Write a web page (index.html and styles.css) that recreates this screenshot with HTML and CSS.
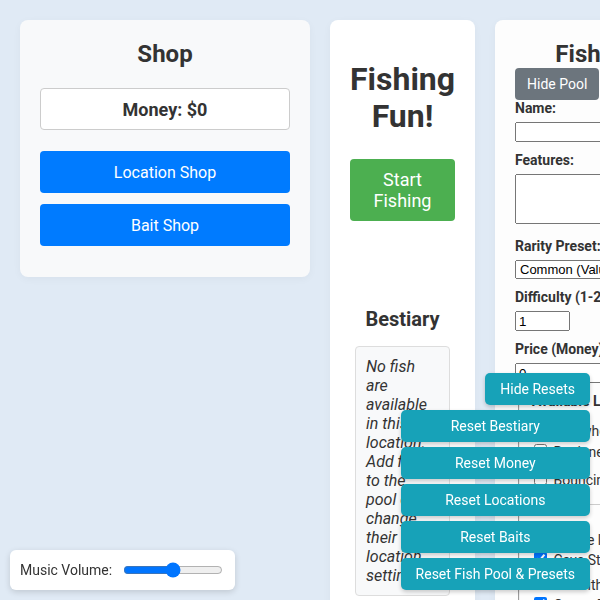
FILE: index.html
```html
<!DOCTYPE html>
<html lang="en">
<head>
<meta charset="utf-8">
<title>Fishing Fun!</title>
<link rel="stylesheet" href="styles.css">
</head>
<body>
<div class="app">
  <section class="panel shop">
    <h2 class="panel-title">Shop</h2>
    <div class="money">Money: $0</div>
    <button class="btn btn-blue">Location Shop</button>
    <button class="btn btn-blue">Bait Shop</button>
  </section>

  <section class="panel main">
    <h1 class="game-title">Fishing Fun!</h1>
    <button class="btn btn-green">Start Fishing</button>
    <div class="bestiary">
      <h2 class="bestiary-title">Bestiary</h2>
      <div class="bestiary-box">No fish are available in this location. Add fish to the pool or change their location settings.</div>
    </div>
  </section>

  <section class="panel pool">
    <h2 class="pool-title">Fish Pool Editor</h2>
    <button class="btn btn-gray">Hide Pool</button>
    <div class="field">
      <label class="field-label">Name:</label>
      <input class="text-input" type="text">
    </div>
    <div class="field">
      <label class="field-label">Features:</label>
      <textarea class="text-area"></textarea>
    </div>
    <div class="field">
      <label class="field-label">Rarity Preset:</label>
      <select class="select-input"><option>Common (Value x1, Difficulty 1)</option></select>
    </div>
    <div class="field">
      <label class="field-label">Difficulty (1-20):</label>
      <input class="num-input" type="text" value="1">
    </div>
    <div class="field">
      <label class="field-label">Price (Money):</label>
      <input class="text-input" type="text" value="0">
    </div>
    <fieldset class="locations">
      <legend class="loc-legend">Available Locations:</legend>
      <div class="loc-group">
        <div class="loc-note">Choose where it spawns</div>
        <label class="loc-item"><input type="checkbox"> Beginner's Lake Shore</label>
        <label class="loc-item"><input type="checkbox"> Bouncing Brook</label>
      </div>
      <div class="loc-group loc-sep">
        <div class="loc-note">Deep cave location</div>
        <label class="loc-item"><input type="checkbox" checked> Cave Stream</label>
        <div class="loc-note loc-gap">Shared with the lake</div>
        <label class="loc-item"><input type="checkbox" checked> Ocean Pier</label>
      </div>
    </fieldset>
  </section>
</div>

<div class="resets">
  <button class="btn btn-teal">Hide Resets</button>
  <div class="reset-list">
    <button class="btn btn-teal">Reset Bestiary</button>
    <button class="btn btn-teal">Reset Money</button>
    <button class="btn btn-teal">Reset Locations</button>
    <button class="btn btn-teal">Reset Baits</button>
    <button class="btn btn-teal">Reset Fish Pool &amp; Presets</button>
  </div>
</div>

<div class="volume">
  <label class="volume-label">Music Volume:</label>
  <input class="volume-range" type="range" min="0" max="1" step="0.01" value="0.5">
</div>
</body>
</html>
```

FILE: styles.css
```css
html, body {
  margin: 0;
  padding: 0;
  overflow: hidden;
}
body {
  background: #e0eaf5;
  font-family: Roboto, "Liberation Sans", sans-serif;
  color: #333;
}
.app {
  display: flex;
  align-items: flex-start;
  gap: 20px;
  padding: 20px;
}
.panel {
  box-sizing: border-box;
  flex: 0 0 auto;
  padding: 20px;
  border-radius: 8px;
  background: #fff;
  box-shadow: 0 2px 8px rgba(0, 0, 0, 0.04);
}
.shop {
  width: 290px;
  background: #f8f9fa;
}
.main {
  width: 145px;
  text-align: center;
}
.pool {
  width: 290px;
  background: #fdfdfd;
}
.panel-title,
.pool-title {
  font-size: 24px;
  line-height: 28px;
  font-weight: 700;
  text-align: center;
}
.panel-title {
  margin: 0 0 20px;
}
.pool-title {
  margin: 0;
}
.money {
  box-sizing: border-box;
  background: #fff;
  border: 1px solid #ccc;
  border-radius: 4px;
  padding: 10px;
  height: 42px;
  font-size: 18px;
  line-height: 21px;
  font-weight: 700;
  text-align: center;
  margin-bottom: 21px;
}
.btn {
  font-family: Roboto, "Liberation Sans", sans-serif;
  border: none;
  color: #fff;
  cursor: pointer;
  font-size: 16px;
}
.btn-blue {
  display: block;
  width: 100%;
  height: 42px;
  background: #007bff;
  border-radius: 4px;
  margin-bottom: 11px;
}
.btn-green {
  display: block;
  width: 100%;
  background: #4caf50;
  border-radius: 4px;
  font-size: 18px;
  line-height: 21px;
  padding: 10px 20px;
}
.btn-gray {
  display: block;
  background: #6c757d;
  border-radius: 4px;
  font-size: 14px;
  padding: 8px 12px;
  line-height: 16px;
}
.btn-teal {
  background: #17a2b8;
  border-radius: 5px;
  font-size: 14px;
  padding: 8px 15px;
  line-height: 16px;
  box-shadow: 0 2px 4px rgba(0, 0, 0, 0.2);
}
.game-title {
  font-size: 32px;
  line-height: 37px;
  font-weight: 700;
  margin: 21px 0 24px;
}
.bestiary {
  margin-top: 87px;
}
.bestiary-title {
  font-size: 20px;
  line-height: 23px;
  font-weight: 700;
  margin: 0 0 15px;
}
.bestiary-box {
  margin: 0 5px;
  padding: 10px;
  background: #f8f9fa;
  border: 1px solid #ddd;
  border-radius: 4px;
  font-style: italic;
  font-size: 16px;
  text-align: left;
}
.field {
  padding-bottom: 10px;
}
.field-label {
  display: block;
  font-size: 14px;
  line-height: 17px;
  font-weight: 700;
  margin-bottom: 5px;
}
.text-input,
.text-area,
.select-input,
.num-input {
  display: block;
  box-sizing: border-box;
  margin: 0;
}
.text-input {
  width: 100%;
  height: 20px;
}
.text-area {
  width: 100%;
  height: 50px;
  margin-bottom: 4px;
}
.select-input {
  width: 100%;
  height: 19px;
  font-size: 13px;
}
.num-input {
  width: 55px;
  height: 20px;
}
.locations {
  margin: 0 2px 0 3px;
  padding: 0 10px;
  font-size: 14px;
}
.loc-legend {
  font-weight: 700;
  line-height: 16px;
}
.loc-group {
  padding-top: 12px;
}
.loc-note {
  line-height: 20px;
}
.loc-item {
  display: block;
  line-height: 20px;
  white-space: nowrap;
}
.loc-item + .loc-item {
  margin-top: 7px;
}
.loc-sep {
  border-top: 1px solid #ccc;
  margin-top: 14px;
  padding-top: 27px;
}
.loc-sep .loc-note,
.loc-sep .loc-item {
  line-height: 17px;
}
.loc-gap {
  margin-top: 8px;
}
.resets {
  position: fixed;
  right: 10px;
  bottom: 10px;
  display: flex;
  flex-direction: column;
  align-items: flex-end;
  gap: 5px;
  z-index: 10;
}
.reset-list {
  display: flex;
  flex-direction: column;
  gap: 5px;
}
.volume {
  position: fixed;
  left: 10px;
  bottom: 10px;
  display: flex;
  align-items: center;
  height: 40px;
  box-sizing: border-box;
  padding: 0 10px;
  background: #fff;
  border-radius: 6px;
  box-shadow: 0 2px 6px rgba(0, 0, 0, 0.15);
  z-index: 10;
}
.volume-label {
  font-size: 14px;
  color: #333;
  margin-right: 9px;
}
.volume-range {
  width: 100px;
  margin: 2px;
}
```
